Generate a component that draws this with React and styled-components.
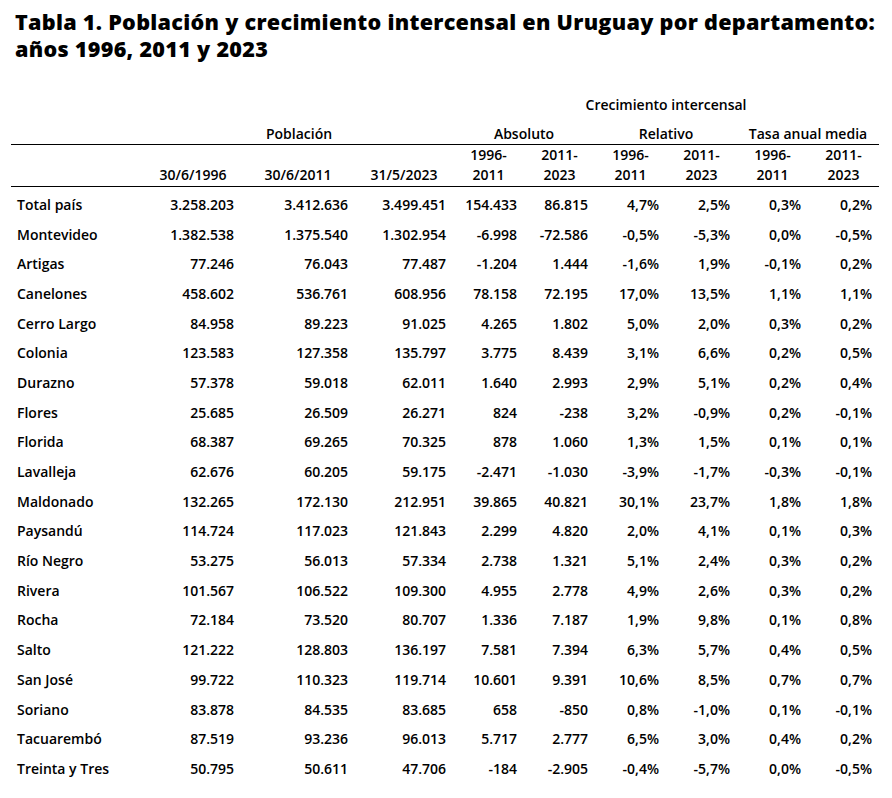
import React from "react";
import styled, { createGlobalStyle } from "styled-components";

const GlobalStyle = createGlobalStyle`
  html, body { margin: 0; padding: 0; background: #ffffff; }
  body { font-family: "Open Sans", "Noto Sans", sans-serif; color: #000; }
`;

const Page = styled.div`
  width: 892px;
  padding: 8px 0 0 15px;
  box-sizing: border-box;
`;

const Title = styled.h1`
  margin: 0;
  font-family: "Open Sans", sans-serif;
  font-weight: 800;
  font-size: 21.6px;
  line-height: 27px;
  letter-spacing: 0.28px;
  color: #000;
  white-space: nowrap;
`;

const Table = styled.table`
  margin: 24px 0 0 -4px;
  border-collapse: collapse;
  table-layout: fixed;
  width: 868px;
  font-family: "Open Sans", sans-serif;
  font-weight: 600;
  font-size: 14px;
  color: #000;
`;

const GroupCell = styled.th`
  font-weight: 600;
  text-align: center;
  padding: 0;
  height: ${(p) => p.$h}px;
  vertical-align: middle;
  border-bottom: ${(p) => (p.$line ? "1px solid #000" : "none")};
`;

const SubHead = styled.th`
  font-weight: 600;
  text-align: center;
  padding: 0 0 1px 0;
  height: 38px;
  line-height: 20px;
  vertical-align: bottom;
  border-bottom: 1px solid #000;
`;

const Row = styled.tr`
  height: ${(p) => (p.$first ? 32.7 : 29.7)}px;
`;

const LabelCell = styled.td`
  text-align: left;
  padding: ${(p) => (p.$first ? "3px" : "0")} 0 0 6px;
  white-space: nowrap;
`;

const NumCell = styled.td`
  text-align: right;
  padding: ${(p) => (p.$first ? "3px" : "0")} 7px 0 0;
  white-space: nowrap;
`;

const widths = [134, 96, 114, 98, 71, 71, 71, 71, 71, 71];

const data = [
  ["Total país", "3.258.203", "3.412.636", "3.499.451", "154.433", "86.815", "4,7%", "2,5%", "0,3%", "0,2%"],
  ["Montevideo", "1.382.538", "1.375.540", "1.302.954", "-6.998", "-72.586", "-0,5%", "-5,3%", "0,0%", "-0,5%"],
  ["Artigas", "77.246", "76.043", "77.487", "-1.204", "1.444", "-1,6%", "1,9%", "-0,1%", "0,2%"],
  ["Canelones", "458.602", "536.761", "608.956", "78.158", "72.195", "17,0%", "13,5%", "1,1%", "1,1%"],
  ["Cerro Largo", "84.958", "89.223", "91.025", "4.265", "1.802", "5,0%", "2,0%", "0,3%", "0,2%"],
  ["Colonia", "123.583", "127.358", "135.797", "3.775", "8.439", "3,1%", "6,6%", "0,2%", "0,5%"],
  ["Durazno", "57.378", "59.018", "62.011", "1.640", "2.993", "2,9%", "5,1%", "0,2%", "0,4%"],
  ["Flores", "25.685", "26.509", "26.271", "824", "-238", "3,2%", "-0,9%", "0,2%", "-0,1%"],
  ["Florida", "68.387", "69.265", "70.325", "878", "1.060", "1,3%", "1,5%", "0,1%", "0,1%"],
  ["Lavalleja", "62.676", "60.205", "59.175", "-2.471", "-1.030", "-3,9%", "-1,7%", "-0,3%", "-0,1%"],
  ["Maldonado", "132.265", "172.130", "212.951", "39.865", "40.821", "30,1%", "23,7%", "1,8%", "1,8%"],
  ["Paysandú", "114.724", "117.023", "121.843", "2.299", "4.820", "2,0%", "4,1%", "0,1%", "0,3%"],
  ["Río Negro", "53.275", "56.013", "57.334", "2.738", "1.321", "5,1%", "2,4%", "0,3%", "0,2%"],
  ["Rivera", "101.567", "106.522", "109.300", "4.955", "2.778", "4,9%", "2,6%", "0,3%", "0,2%"],
  ["Rocha", "72.184", "73.520", "80.707", "1.336", "7.187", "1,9%", "9,8%", "0,1%", "0,8%"],
  ["Salto", "121.222", "128.803", "136.197", "7.581", "7.394", "6,3%", "5,7%", "0,4%", "0,5%"],
  ["San José", "99.722", "110.323", "119.714", "10.601", "9.391", "10,6%", "8,5%", "0,7%", "0,7%"],
  ["Soriano", "83.878", "84.535", "83.685", "658", "-850", "0,8%", "-1,0%", "0,1%", "-0,1%"],
  ["Tacuarembó", "87.519", "93.236", "96.013", "5.717", "2.777", "6,5%", "3,0%", "0,4%", "0,2%"],
  ["Treinta y Tres", "50.795", "50.611", "47.706", "-184", "-2.905", "-0,4%", "-5,7%", "0,0%", "-0,5%"],
];

const periods = ["1996-", "2011-", "1996-", "2011-", "1996-", "2011-"];
const periodEnds = ["2011", "2023", "2011", "2023", "2011", "2023"];

export default function App() {
  return (
    <>
      <GlobalStyle />
      <Page>
        <Title>
          Tabla 1. Población y crecimiento intercensal en Uruguay por departamento:
          <br />
          años 1996, 2011 y 2023
        </Title>
        <Table>
          <colgroup>
            {widths.map((w, i) => (
              <col key={i} style={{ width: w }} />
            ))}
          </colgroup>
          <thead>
            <tr>
              <GroupCell $h={36} colSpan={4} />
              <GroupCell $h={36} colSpan={6}>Crecimiento intercensal</GroupCell>
            </tr>
            <tr>
              <GroupCell $h={22} $line />
              <GroupCell $h={22} $line colSpan={3}>Población</GroupCell>
              <GroupCell $h={22} $line colSpan={2}>Absoluto</GroupCell>
              <GroupCell $h={22} $line colSpan={2}>Relativo</GroupCell>
              <GroupCell $h={22} $line colSpan={2}>Tasa anual media</GroupCell>
            </tr>
            <tr>
              <SubHead />
              <SubHead>30/6/1996</SubHead>
              <SubHead>30/6/2011</SubHead>
              <SubHead>31/5/2023</SubHead>
              {periods.map((p, i) => (
                <SubHead key={i}>
                  {p}
                  <br />
                  {periodEnds[i]}
                </SubHead>
              ))}
            </tr>
          </thead>
          <tbody>
            {data.map((row, ri) => (
              <Row key={row[0]} $first={ri === 0}>
                <LabelCell $first={ri === 0}>{row[0]}</LabelCell>
                {row.slice(1).map((v, ci) => (
                  <NumCell key={ci} $first={ri === 0}>{v}</NumCell>
                ))}
              </Row>
            ))}
          </tbody>
        </Table>
      </Page>
    </>
  );
}
